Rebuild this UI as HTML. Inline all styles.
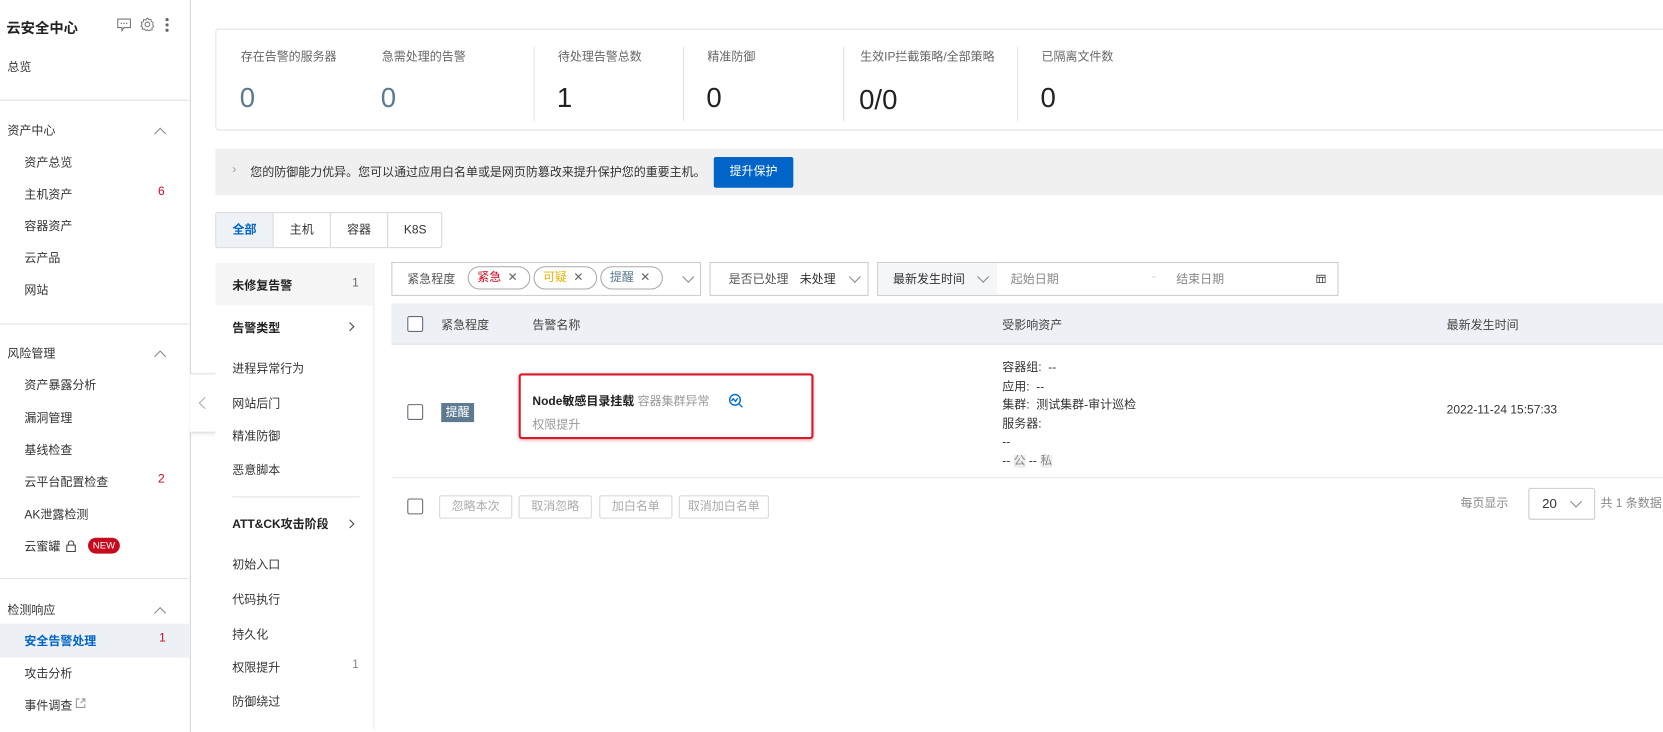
<!DOCTYPE html>
<html><head><meta charset="utf-8">
<style>
*{margin:0;padding:0;box-sizing:border-box}
html,body{width:1663px;height:723px;overflow:hidden;background:#fff}
#w{position:absolute;left:0;top:0;width:1568px;height:682px;transform:scale(1.0606);transform-origin:0 0;font-family:"Liberation Sans","Noto Sans CJK SC",sans-serif;font-size:11.3px;color:#333}
.a{position:absolute;white-space:nowrap}
.sb{position:absolute;left:0;top:0;width:180px;height:690px;border-right:1px solid #d4d4d4;background:#fff}
.hr{position:absolute;height:1px;background:#e3e3e3}
.red{color:#c80a1e}
.cb{position:absolute;width:15px;height:15px;border:1px solid #606a7a;border-radius:2px;background:#fff}
.btn{position:absolute;height:22px;border:1px solid #d8d8d8;color:#aaa;font-size:11.3px;line-height:20px;text-align:center;border-radius:2px}
.chip{position:absolute;top:251px;height:22px;border:1px solid #aaa;border-radius:11px;line-height:20px;padding-left:8px;font-size:11.3px}
.chip i{font-style:normal;color:#666;margin-left:6px;margin-right:6px}
.dd{position:absolute;width:8px;height:8px;border-right:1px solid #888;border-bottom:1px solid #888;transform:rotate(45deg)}
</style></head><body><div id="w">
<div class="sb">
<div class="a" style="left:6px;top:15px;font-size:13.5px;font-weight:bold;color:#222">云安全中心</div>
<svg class="a" style="left:110px;top:17px" width="14" height="13" viewBox="0 0 14 13"><path d="M1 1h12v8H7l-2 3V9H1z" fill="none" stroke="#777"/><circle cx="4.5" cy="5" r=".7" fill="#777"/><circle cx="7" cy="5" r=".7" fill="#777"/><circle cx="9.5" cy="5" r=".7" fill="#777"/></svg>
<svg class="a" style="left:132px;top:16px" width="14" height="14" viewBox="0 0 14 14"><circle cx="7" cy="7" r="2.2" fill="none" stroke="#777"/><path d="M7 1l1.3 1.6 2-.4.4 2L12.5 5.5 12 7.5l1 1.5-1.7 1.2.1 2-2 .1L8 13 7 12l-1.4 1-1.4-1.6-2 .2.1-2L.8 8.5 2 7 1.2 5.2l1.9-.8.3-2 2 .4z" fill="none" stroke="#777" stroke-width=".9"/></svg>
<div class="a" style="left:156px;top:17px;width:3px"><div style="width:3px;height:3px;border-radius:50%;background:#666;margin-bottom:2px"></div><div style="width:3px;height:3px;border-radius:50%;background:#666;margin-bottom:2px"></div><div style="width:3px;height:3px;border-radius:50%;background:#666"></div></div>
<div class="a" style="left:7px;top:55px">总览</div>
<div class="hr" style="left:0;top:94px;width:178px"></div>
<div class="a" style="left:7px;top:115px">资产中心</div><div class="dd" style="left:147px;top:122px;transform:rotate(-135deg)"></div>
<div class="a" style="left:23px;top:145px">资产总览</div>
<div class="a" style="left:23px;top:175px">主机资产</div><div class="a red" style="left:149px;top:175px">6</div>
<div class="a" style="left:23px;top:205px">容器资产</div>
<div class="a" style="left:23px;top:235px">云产品</div>
<div class="a" style="left:23px;top:265px">网站</div>
<div class="hr" style="left:0;top:305px;width:178px"></div>
<div class="a" style="left:7px;top:325px">风险管理</div><div class="dd" style="left:147px;top:332px;transform:rotate(-135deg)"></div>
<div class="a" style="left:23px;top:355px">资产暴露分析</div>
<div class="a" style="left:23px;top:386px">漏洞管理</div>
<div class="a" style="left:23px;top:416px">基线检查</div>
<div class="a" style="left:23px;top:446px">云平台配置检查</div><div class="a red" style="left:149px;top:446px">2</div>
<div class="a" style="left:23px;top:477px">AK泄露检测</div>
<div class="a" style="left:23px;top:507px">云蜜罐</div>
<svg class="a" style="left:62px;top:509px" width="10" height="12" viewBox="0 0 10 12"><path d="M2.5 5V3.5a2.5 2.5 0 015 0V5M1 5h8v6H1z" fill="none" stroke="#444"/></svg>
<div class="a" style="left:83px;top:507px;width:30px;height:15px;border-radius:8px;background:#c80a1e;color:#fff;font-size:9px;line-height:15px;text-align:center">NEW</div>
<div class="hr" style="left:0;top:545px;width:178px"></div>
<div class="a" style="left:7px;top:567px">检测响应</div><div class="dd" style="left:147px;top:574px;transform:rotate(-135deg)"></div>
<div class="a" style="left:0;top:588px;width:179px;height:32px;background:#edf0f5"></div>
<div class="a" style="left:23px;top:596px;color:#0064c8;font-weight:bold">安全告警处理</div><div class="a red" style="left:150px;top:596px">1</div>
<div class="a" style="left:23px;top:627px">攻击分析</div>
<div class="a" style="left:23px;top:657px">事件调查</div>
<svg class="a" style="left:71px;top:658px" width="10" height="10" viewBox="0 0 10 10"><path d="M4 1H1v8h8V6M6 1h3v3M9 1L5 5" fill="none" stroke="#999"/></svg>
</div>
<div class="a" style="left:179px;top:352px;width:27px;height:56px;border:1px solid #ddd;border-left:none;background:#fff;box-shadow:1px 1px 3px rgba(0,0,0,.1)"><div class="dd" style="left:10px;top:23px;transform:rotate(135deg);border-color:#aaa"></div></div>

<!-- stats -->
<div class="a" style="left:203px;top:27px;width:1400px;height:96px;border:1px solid #e3e3e3;border-radius:3px"></div>
<div class="a" style="left:227px;top:45px;color:#666">存在告警的服务器</div><div class="a" style="left:226px;top:77px;font-size:26px;color:#5a7a90">0</div>
<div class="a" style="left:360px;top:45px;color:#666">急需处理的告警</div><div class="a" style="left:359px;top:77px;font-size:26px;color:#5a7a90">0</div>
<div class="a" style="left:503px;top:44px;width:1px;height:70px;background:#e3e3e3"></div>
<div class="a" style="left:526px;top:45px;color:#666">待处理告警总数</div><div class="a" style="left:525px;top:77px;font-size:26px;color:#222">1</div>
<div class="a" style="left:644px;top:44px;width:1px;height:70px;background:#e3e3e3"></div>
<div class="a" style="left:667px;top:45px;color:#666">精准防御</div><div class="a" style="left:666px;top:77px;font-size:26px;color:#222">0</div>
<div class="a" style="left:795px;top:44px;width:1px;height:70px;background:#e3e3e3"></div>
<div class="a" style="left:811px;top:45px;color:#666">生效IP拦截策略/全部策略</div><div class="a" style="left:810px;top:79px;font-size:26px;color:#222">0/0</div>
<div class="a" style="left:959px;top:44px;width:1px;height:70px;background:#e3e3e3"></div>
<div class="a" style="left:982px;top:45px;color:#666">已隔离文件数</div><div class="a" style="left:981px;top:77px;font-size:26px;color:#222">0</div>

<!-- banner -->
<div class="a" style="left:203px;top:140px;width:1400px;height:44px;background:#f0f0f0"></div>
<div class="a" style="left:219px;top:154px;color:#999">›</div>
<div class="a" style="left:236px;top:154px;color:#333">您的防御能力优异。您可以通过应用白名单或是网页防篡改来提升保护您的重要主机。</div>
<div class="a" style="left:673px;top:148px;width:75px;height:29px;background:#0064c8;color:#fff;line-height:29px;text-align:center;border-radius:2px">提升保护</div>

<!-- tabs -->
<div class="a" style="left:203px;top:200px;width:214px;height:34px;border:1px solid #d8d8d8;border-radius:2px"></div>
<div class="a" style="left:204px;top:201px;width:53px;height:32px;background:#eef2f7;color:#0064c8;font-weight:bold;line-height:32px;text-align:center">全部</div>
<div class="a" style="left:257px;top:201px;width:1px;height:32px;background:#d8d8d8"></div>
<div class="a" style="left:258px;top:201px;width:53px;line-height:32px;text-align:center">主机</div>
<div class="a" style="left:311px;top:201px;width:1px;height:32px;background:#d8d8d8"></div>
<div class="a" style="left:312px;top:201px;width:53px;line-height:32px;text-align:center">容器</div>
<div class="a" style="left:365px;top:201px;width:1px;height:32px;background:#d8d8d8"></div>
<div class="a" style="left:366px;top:201px;width:51px;line-height:32px;text-align:center">K8S</div>

<!-- left sub panel -->
<div class="a" style="left:203px;top:248px;width:150px;height:440px;background:#fff;border-right:1px solid #ececec"></div>
<div class="a" style="left:203px;top:248px;width:149px;height:40px;background:#f5f5f5"></div>
<div class="a" style="left:219px;top:261px;font-weight:bold;color:#222">未修复告警</div><div class="a" style="left:332px;top:261px;color:#666">1</div>
<div class="a" style="left:219px;top:301px;font-weight:bold;color:#222">告警类型</div><div class="dd" style="left:327px;top:305px;transform:rotate(-45deg);border-color:#444;width:6px;height:6px"></div>
<div class="a" style="left:219px;top:339px">进程异常行为</div>
<div class="a" style="left:219px;top:372px">网站后门</div>
<div class="a" style="left:219px;top:403px">精准防御</div>
<div class="a" style="left:219px;top:435px">恶意脚本</div>
<div class="hr" style="left:219px;top:468px;width:120px"></div>
<div class="a" style="left:219px;top:486px;font-weight:bold;color:#222">ATT&amp;CK攻击阶段</div><div class="dd" style="left:327px;top:491px;transform:rotate(-45deg);border-color:#444;width:6px;height:6px"></div>
<div class="a" style="left:219px;top:524px">初始入口</div>
<div class="a" style="left:219px;top:557px">代码执行</div>
<div class="a" style="left:219px;top:590px">持久化</div>
<div class="a" style="left:219px;top:621px">权限提升</div><div class="a" style="left:332px;top:621px;color:#888">1</div>
<div class="a" style="left:219px;top:653px">防御绕过</div>

<!-- filters -->
<div class="a" style="left:369px;top:247px;width:292px;height:32px;border:1px solid #ccc"></div>
<div class="a" style="left:384px;top:255px;color:#555">紧急程度</div>
<div class="chip" style="left:441px;width:59px"><span class="red">紧急</span><i>✕</i></div>
<div class="chip" style="left:503px;width:60px"><span style="color:#e8b400">可疑</span><i>✕</i></div>
<div class="chip" style="left:566px;width:59px"><span style="color:#5a7a90">提醒</span><i>✕</i></div>
<div class="dd" style="left:645px;top:257px"></div>
<div class="a" style="left:669px;top:247px;width:150px;height:32px;border:1px solid #ccc"></div>
<div class="a" style="left:687px;top:255px;color:#555">是否已处理</div><div class="a" style="left:754px;top:255px">未处理</div><div class="dd" style="left:802px;top:257px"></div>
<div class="a" style="left:827px;top:247px;width:435px;height:32px;border:1px solid #ccc"></div>
<div class="a" style="left:828px;top:248px;width:112px;height:30px;background:#f5f6f8"></div>
<div class="a" style="left:842px;top:255px">最新发生时间</div><div class="dd" style="left:923px;top:257px"></div>
<div class="a" style="left:953px;top:255px;color:#888">起始日期</div>
<div class="a" style="left:1086px;top:255px;color:#ccc">-</div>
<div class="a" style="left:1109px;top:255px;color:#888">结束日期</div>
<svg class="a" style="left:1241px;top:258px" width="9" height="9" viewBox="0 0 9 9"><path d="M.5 1.5h8v7h-8zM.5 3.5h8M3 3.5v5M6 3.5v5" fill="none" stroke="#555" stroke-width=".9"/></svg>

<!-- table -->
<div class="a" style="left:369px;top:286px;width:1200px;height:39px;background:#edf1f5;border-bottom:1px solid #e0e0e0"></div>
<div class="cb" style="left:384px;top:298px"></div>
<div class="a" style="left:416px;top:298px;color:#444">紧急程度</div>
<div class="a" style="left:502px;top:298px;color:#444">告警名称</div>
<div class="a" style="left:945px;top:298px;color:#444">受影响资产</div>
<div class="a" style="left:1364px;top:298px;color:#444">最新发生时间</div>
<div class="cb" style="left:384px;top:381px"></div>
<div class="a" style="left:416px;top:380px;width:31px;height:18px;background:#5e7a90;color:#fff;line-height:18px;text-align:center">提醒</div>
<div class="a" style="left:489px;top:352px;width:278px;height:62px;border:2px solid #d9182a;border-radius:3px;box-shadow:0 1px 3px rgba(200,0,0,.3)"></div>
<div class="a" style="left:502px;top:370px;font-weight:bold;color:#222">Node敏感目录挂载 <span style="font-weight:normal;color:#999">容器集群异常</span></div>
<svg class="a" style="left:686px;top:370px" width="16" height="16" viewBox="0 0 16 16"><circle cx="7" cy="7" r="5" fill="none" stroke="#0a6fd0" stroke-width="1.4"/><path d="M10.5 10.5l3.5 3.5M3.5 8l2-2 2 2.5 2-3" fill="none" stroke="#0a6fd0" stroke-width="1.3"/></svg>
<div class="a" style="left:502px;top:392px;color:#999">权限提升</div>
<div class="a" style="left:945px;top:339px;line-height:17.5px;color:#333">容器组: &nbsp;--<br>应用: &nbsp;--<br>集群: &nbsp;测试集群-审计巡检<br>服务器:<br>--<br>-- <span style="background:#eee;color:#888">公</span> -- <span style="background:#eee;color:#888">私</span></div>
<div class="a" style="left:1364px;top:381px;color:#333">2022-11-24 15:57:33</div>
<div class="hr" style="left:369px;top:450px;width:1200px"></div>
<div class="cb" style="left:384px;top:470px"></div>
<div class="btn" style="left:414px;top:467px;width:69px">忽略本次</div>
<div class="btn" style="left:489px;top:467px;width:69px">取消忽略</div>
<div class="btn" style="left:565px;top:467px;width:69px">加白名单</div>
<div class="btn" style="left:640px;top:467px;width:85px">取消加白名单</div>
<div class="a" style="left:1377px;top:466px;color:#888">每页显示</div>
<div class="a" style="left:1441px;top:460px;width:63px;height:30px;border:1px solid #ccc;border-radius:2px"><span style="position:absolute;left:12px;top:7px;color:#333;font-size:12.5px">20</span><div class="dd" style="left:40px;top:8px"></div></div>
<div class="a" style="left:1509px;top:466px;color:#888">共 1 条数据</div>
</div></body></html>
